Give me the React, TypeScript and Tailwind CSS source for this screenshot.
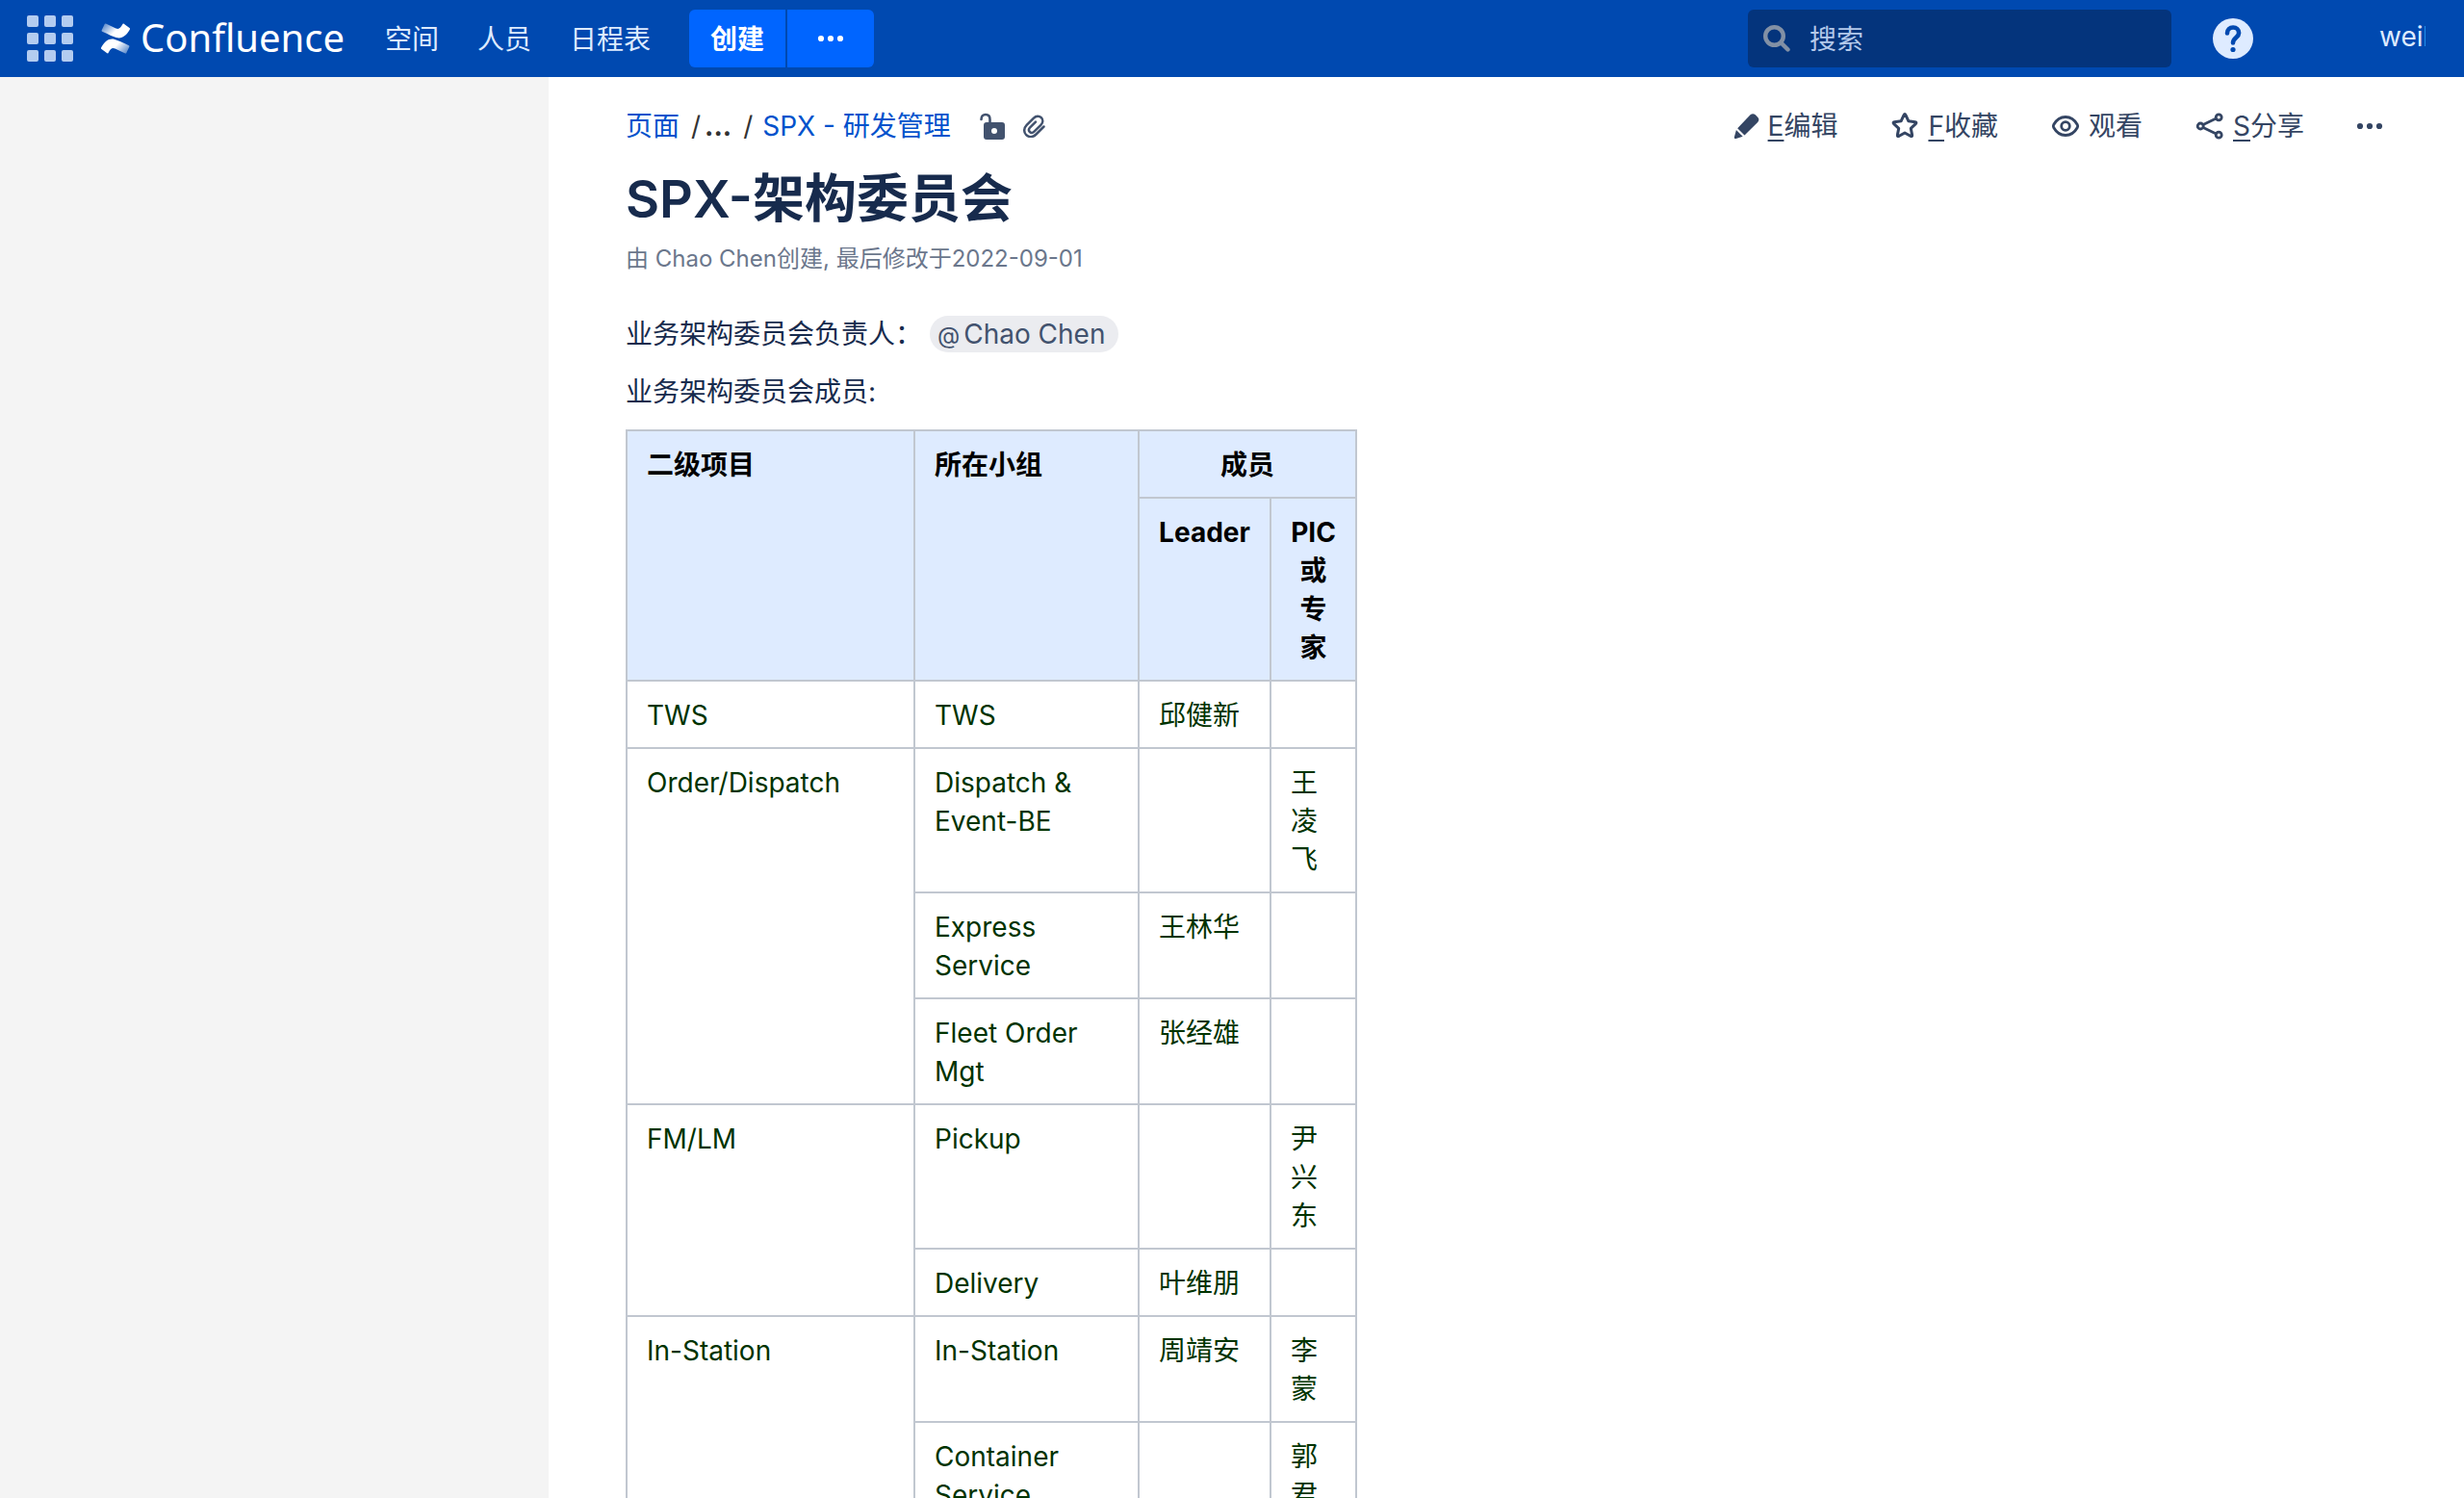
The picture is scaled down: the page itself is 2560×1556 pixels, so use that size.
import React from "react";

const font = "font-['Inter','Noto_Sans_CJK_SC',sans-serif]";
const cell = "border-2 border-[#c1c7d0] px-5 pt-[15px] pb-[13px] align-top";

function AppGrid() {
  return (
    <span className="grid grid-cols-3 gap-[6px]">
      {Array.from({ length: 9 }, (_, i) => (
        <span key={i} className="size-3 rounded-[2px] bg-[#b3ccf0]" />
      ))}
    </span>
  );
}

function Logo() {
  return (
    <svg className="h-8 w-8" viewBox="0 0 32 32" aria-hidden="true">
      <defs>
        <linearGradient id="lower" x1="1" y1="0.7" x2="0.2" y2="0.3">
          <stop offset="0" stopColor="#fff" stopOpacity="0.4" />
          <stop offset="0.6" stopColor="#fff" />
        </linearGradient>
        <linearGradient id="upper" x1="0" y1="0.3" x2="0.8" y2="0.7">
          <stop offset="0" stopColor="#fff" stopOpacity="0.4" />
          <stop offset="0.6" stopColor="#fff" />
        </linearGradient>
      </defs>
      <path fill="url(#lower)" d="M1.2 25.2c4-6.600 8-9.800 14-8.200 3.500.9 8 3.200 14.700 6.200.5.200.700.700.500 1.200l-3.100 6.600c-.2.500-.8.700-1.200.500-3.600-1.700-7-3.400-10.500-4.900-3-1.200-4.200-.4-7.100 4.300-.3.500-.8.600-1.200.400L1.500 27c-.5-.3-.7-1-.3-1.800z" />
      <path fill="url(#upper)" d="M30.800 6.800c-4 6.600-8 9.800-14 8.200C13.300 14.100 8.800 11.800 2.100 8.800c-.5-.2-.7-.7-.5-1.200L4.700 1c.2-.5.8-.7 1.200-.5 3.600 1.700 7 3.400 10.500 4.900 3 1.200 4.200.4 7.100-4.300.3-.5.800-.6 1.200-.4L30.500 5c.5.300.7 1 .3 1.800z" />
    </svg>
  );
}

function Dots({ className }: { className: string }) {
  return (
    <svg className={className} viewBox="0 0 28 8" fill="currentColor" aria-hidden="true">
      <circle cx="4" cy="4" r="3.100" />
      <circle cx="14" cy="4" r="3.100" />
      <circle cx="24" cy="4" r="3.100" />
    </svg>
  );
}

function Header() {
  return (
    <header className="flex h-20 shrink-0 items-center bg-[#0049b0] text-[28px] text-[#deebff]">
      <button aria-label="应用" className="ml-7"><AppGrid /></button>
      <a href="#" className="ml-7 flex items-center gap-[10px] text-white">
        <Logo />
        <span className="pb-[3px] font-['Noto_Sans',sans-serif] text-[40px] leading-none">Confluence</span>
      </a>
      <nav className="ml-[42px] flex gap-10 pt-[2px]">
        <a href="#">空间</a>
        <a href="#">人员</a>
        <a href="#">日程表</a>
      </nav>
      <div className="ml-10 flex gap-[2px] text-white">
        <button className="h-15 w-[100px] rounded-l-md bg-[#0065ff] pt-[2px] font-bold">创建</button>
        <button aria-label="更多" className="flex h-15 w-[90px] items-center justify-center rounded-r-md bg-[#0065ff]"><Dots className="h-2 w-7" /></button>
      </div>
      <label className="ml-auto flex h-15 w-[440px] items-center gap-5 rounded-md bg-[#04347c] px-4">
        <svg className="size-7 shrink-0" viewBox="0 0 28 28" fill="none" stroke="#8290a5" strokeWidth="4.400" strokeLinecap="round" aria-hidden="true">
          <circle cx="11.500" cy="11.500" r="9.300" />
          <path d="M19 19l6.500 6.500" />
        </svg>
        <input aria-label="搜索" placeholder="搜索" className="w-full bg-transparent pt-[2px] outline-none placeholder:text-[#b3c8ea]" />
      </label>
      <button aria-label="帮助" className="ml-[43px]">
        <svg className="size-[42px]" viewBox="0 0 42 42" aria-hidden="true">
          <circle cx="21" cy="21" r="21" fill="#deebff" />
          <path d="M15 15.500c0-3.800 2.600-6 6.100-6s6 2.300 6 5.700c0 4.600-6.100 5-6.100 10.300" fill="none" stroke="#0049b0" strokeWidth="4.600" strokeLinecap="round" />
          <circle cx="21" cy="32.500" r="2.600" fill="#0049b0" />
        </svg>
      </button>
      <a href="#" className="mr-10 ml-[131px] h-10 w-12 overflow-hidden text-[28px] leading-[36px]">weil</a>
    </header>
  );
}

function Action({ icon, hotkey, children }: { icon: React.ReactNode; hotkey?: string; children: string }) {
  return (
    <button className="flex items-center gap-2">
      {icon}
      <span><span className="underline decoration-2 underline-offset-4">{hotkey}</span>{children}</span>
    </button>
  );
}

const pencil = (
  <svg className="size-7" viewBox="0 0 28 28" fill="currentColor" aria-hidden="true">
    <path d="M17.500 2.300a4 4 0 0 1 5.300 0l2.400 2.400a4 4 0 0 1 0 5.300L11.500 23.500l-7.300-7.300zM2.900 18l6.800 6.800-7 2.300c-1.200.4-2.200-.5-1.800-1.800z" />
  </svg>
);
const star = (
  <svg className="size-8" viewBox="0 0 32 32" fill="none" stroke="currentColor" strokeWidth="3" strokeLinejoin="round" aria-hidden="true">
    <path d="M15 4.600q1-2 2 0l2.900 6.200 6.800.9q2.100.4.600 2l-5 4.700 1.300 6.700q.3 2.200-1.700 1.200L16 23l-5.900 3.300q-2 1-1.700-1.200l1.300-6.700-5-4.700q-1.500-1.600.6-2l6.800-.9z" />
  </svg>
);
const eye = (
  <svg className="size-8" viewBox="0 0 32 32" fill="none" stroke="currentColor" strokeWidth="2.800" aria-hidden="true">
    <path d="M3.700 14.500C6.500 9.500 10.800 6.500 16 6.500s9.500 3 12.300 8q.8 1.500 0 3c-2.800 5-7.100 8-12.300 8s-9.500-3-12.300-8q-.8-1.500 0-3z" />
    <circle cx="16" cy="16" r="4.300" />
  </svg>
);
const share = (
  <svg className="size-8" viewBox="0 0 32 32" fill="none" stroke="currentColor" strokeWidth="2.800" aria-hidden="true">
    <circle cx="6.200" cy="16" r="3" />
    <circle cx="25.200" cy="6.800" r="3" />
    <circle cx="25.200" cy="25.200" r="3" />
    <path d="M9 14.600l13.500-6.500M9 17.400l13.500 6.500" />
  </svg>
);

function Toolbar() {
  return (
    <div className="flex items-center gap-[54px] text-[#344563]">
      <Action icon={pencil} hotkey="E">编辑</Action>
      <Action icon={star} hotkey="F">收藏</Action>
      <Action icon={eye}>观看</Action>
      <Action icon={share} hotkey="S">分享</Action>
      <button aria-label="更多操作"><Dots className="h-2 w-7" /></button>
    </div>
  );
}

function Breadcrumbs() {
  return (
    <nav aria-label="面包屑" className="flex items-center text-[#0052cc]">
      <a href="#">页面</a>
      <span className="ml-3 text-[#333333]">/</span>
      <button className="ml-1 font-bold text-[#333333]">...</button>
      <span className="mr-[10px] ml-3 text-[#333333]">/</span>
      <a href="#">SPX - 研发管理</a>
      <a href="#" aria-label="限制" className="ml-[30px] text-[#42526e]">
        <svg className="h-7 w-[26px]" viewBox="0 0 26 28" fill="none" stroke="currentColor" aria-hidden="true">
          <path d="M1.500 7C1.500 3.500 3.500 2 6 2s4.500 1.500 4.500 5V12" strokeWidth="2.600" strokeLinecap="round" />
          <path fillRule="evenodd" fill="currentColor" stroke="none" d="M7 10h16a3 3 0 0 1 3 3v12a3 3 0 0 1-3 3H7a3 3 0 0 1-3-3V13a3 3 0 0 1 3-3zm8 6a3 3 0 1 0 0 6 3 3 0 0 0 0-6z" />
        </svg>
      </a>
      <a href="#" aria-label="附件" className="ml-[18px] text-[#42526e]">
        <svg className="size-6" viewBox="0 0 24 24" fill="none" stroke="currentColor" strokeWidth="2.500" strokeLinecap="round" aria-hidden="true">
          <path d="M22.500 12.500l-8 8c-3.300 3.300-7.500 3.300-10.300.6s-2.700-7 .5-10.200L12 3.600c2.400-2.400 5.700-2.500 7.800-.4s2 5.200-.4 7.600l-6.900 6.900c-1.500 1.500-3.400 1.500-4.600.300s-1.200-3.100.3-4.600l5.800-5.800" />
        </svg>
      </a>
    </nav>
  );
}

type Team = { name: React.ReactNode; leader?: string; pic?: string };
const projects: { name: string; teams: Team[] }[] = [
  { name: "TWS", teams: [{ name: "TWS", leader: "邱健新" }] },
  {
    name: "Order/Dispatch",
    teams: [
      { name: "Dispatch & Event-BE", pic: "王凌飞" },
      { name: "Express Service", leader: "王林华" },
      { name: "Fleet Order Mgt", leader: "张经雄" },
    ],
  },
  { name: "FM/LM", teams: [{ name: "Pickup", pic: "尹兴东" }, { name: "Delivery", leader: "叶维朋" }] },
  {
    name: "In-Station",
    teams: [
      { name: "In-Station", leader: "周靖安", pic: "李蒙" },
      { name: "Container Service", pic: "郭君" },
    ],
  },
];

function MembersTable() {
  return (
    <table className="mt-[19px] w-[760px] table-fixed border-collapse text-left">
      <colgroup>
        <col className="w-[299px]" />
        <col className="w-[233px]" />
        <col className="w-[137px]" />
        <col />
      </colgroup>
      <thead className="bg-[#deebff] text-black">
        <tr>
          <th rowSpan={2} className={cell}>二级项目</th>
          <th rowSpan={2} className={cell}>所在小组</th>
          <th colSpan={2} className={`${cell} text-center`}>成员</th>
        </tr>
        <tr>
          <th className={`${cell} text-center`}>Leader</th>
          <th className={`${cell} text-center`}>PIC<br />或<br />专<br />家</th>
        </tr>
      </thead>
      <tbody className="text-[#003300]">
        {projects.map((p) =>
          p.teams.map((t, i) => (
            <tr key={`${p.name}-${i}`}>
              {i === 0 && <td rowSpan={p.teams.length} className={cell}>{p.name}</td>}
              <td className={cell}>{t.name}</td>
              <td className={cell}>{t.leader}</td>
              <td className={cell}><div className="w-7">{t.pic}</div></td>
            </tr>
          )),
        )}
      </tbody>
    </table>
  );
}

export default function App() {
  return (
    <div className={`flex h-screen flex-col overflow-hidden bg-white text-[28px] leading-10 text-[#172b4d] ${font}`}>
      <Header />
      <div className="flex min-h-0 flex-1">
        <aside className="w-[570px] shrink-0 bg-[#f4f4f4]" />
        <main className="flex-1 overflow-hidden pt-[31px] pr-[84px] pl-20">
          <div className="flex items-center justify-between">
            <Breadcrumbs />
            <Toolbar />
          </div>
          <h1 className="mt-6 text-[54px] leading-[64px] font-semibold">SPX-架构委员会</h1>
          <p className="mt-[14px] text-[24px] leading-8 text-[#6b778c]">由 Chao Chen创建, 最后修改于2022-09-01</p>
          <p className="mt-[42px]">
            业务架构委员会负责人：
            <a href="#" className="ml-2 rounded-full bg-[#ebecf0] py-[2px] pr-[14px] pl-2 text-[#42526e]"><span className="mr-1 text-[24px] leading-none">@</span>Chao Chen</a>
          </p>
          <p className="mt-5">业务架构委员会成员:</p>
          <MembersTable />
        </main>
      </div>
    </div>
  );
}
